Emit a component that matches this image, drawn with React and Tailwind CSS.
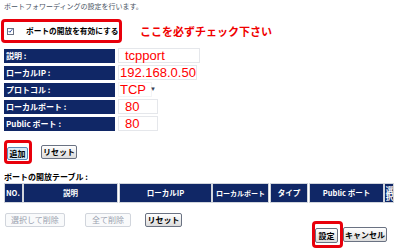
import React from 'react';

const navy = 'bg-[#102766]';

const FormRow = ({ label, children }) => (
    <div className="flex items-center gap-[3px] h-[15px]">
        <div className={`w-[111px] h-[14px] ${navy} text-white font-bold text-[8px] leading-[14px] pl-[2px] whitespace-nowrap`}>
            {label}
        </div>
        {children}
    </div>
);

const Btn = ({ children, className = '', disabled = false }) => (
    <button
        className={`h-[14px] p-0 flex items-center justify-center text-[8px] leading-[10px] rounded-[2px] border whitespace-nowrap ${disabled
            ? 'border-gray-300 bg-gray-50 text-gray-400'
            : 'border-gray-500 bg-gradient-to-b from-white to-[#dcdcdc] text-black font-bold'
            } ${className}`}
    >
        {children}
    </button>
);

const HeadCell = ({ w, children, className = '' }) => (
    <div className={`${w} h-[18px] ${navy} text-white font-bold text-[7.5px] whitespace-nowrap flex items-center justify-center outline outline-1 outline-gray-300 ${className}`}>
        {children}
    </div>
);

export default function App() {
    return (
        <div className="w-[400px] h-[250px] bg-white overflow-hidden font-['Noto_Sans_CJK_JP',sans-serif]">
            <div className="pl-[4px] pt-[2px]">
                {/* Intro */}
                <p className="text-[7px] leading-[9px] text-gray-600 whitespace-nowrap">ポートフォワーディングの設定を行います。</p>

                {/* Enable checkbox with callout */}
                <div className="mt-[8px] flex items-center">
                    <div className="-ml-[3px] w-[121px] h-[24px] border-[3px] border-[#e8000b] rounded-[4px] flex items-center pl-[3px]">
                        <span className="w-[7px] h-[7px] border border-gray-500 bg-white flex items-center justify-center">
                            <svg viewBox="0 0 8 8" className="w-[6px] h-[6px]">
                                <path d="M1 4 L3 6 L7 1" fill="none" stroke="#1d3f9a" strokeWidth="1.4" />
                            </svg>
                        </span>
                        <span className="ml-[12px] text-[7.7px] font-bold text-black whitespace-nowrap">ポートの開放を有効にする</span>
                    </div>
                    <span className="ml-[18px] text-[11px] font-bold text-[#f00000] whitespace-nowrap">ここを必ずチェック下さい</span>
                </div>

                {/* Form */}
                <div className="mt-[5px] flex flex-col gap-[2px]">
                    <FormRow label="説明 :">
                        <div className="w-[82px] h-[15px] border border-gray-200 text-[13px] leading-[13px] text-[#f00] pl-[6px] font-['Liberation_Sans',sans-serif]">tcpport</div>
                    </FormRow>
                    <FormRow label="ローカルIP :">
                        <div className="w-[79px] h-[15px] border border-gray-200 text-[13px] leading-[13px] text-[#f00] pl-[1px] font-['Liberation_Sans',sans-serif] whitespace-nowrap">192.168.0.50</div>
                    </FormRow>
                    <FormRow label="プロトコル :">
                        <div className="w-[34px] h-[15px] border border-gray-100 text-[13px] leading-[13px] text-[#f00] pl-[1px] font-['Liberation_Sans',sans-serif] flex items-center">
                            TCP
                            <span className="ml-[4px] text-[6px] text-gray-700">▼</span>
                        </div>
                    </FormRow>
                    <FormRow label="ローカルポート :">
                        <div className="w-[40px] h-[15px] border border-gray-200 text-[13px] leading-[13px] text-[#f00] pl-[6px] font-['Liberation_Sans',sans-serif]">80</div>
                    </FormRow>
                    <FormRow label="Public ポート :">
                        <div className="w-[40px] h-[15px] border border-gray-200 text-[13px] leading-[13px] text-[#f00] pl-[6px] font-['Liberation_Sans',sans-serif]">80</div>
                    </FormRow>
                </div>

                {/* Add / Reset */}
                <div className="mt-[9px] flex items-center">
                    <div className="w-[28px] h-[24px] border-[3px] border-[#e8000b] rounded-[4px] flex items-start pl-[0px] pt-[4px]">
                        <button className="w-[21px] h-[13px] p-0 flex items-center justify-center text-[8px] leading-[10px] border border-[#5b8bb8] bg-[#d8ebf8] rounded-[2px] text-black font-bold">追加</button>
                    </div>
                    <Btn className="ml-[9px] w-[36px] h-[13px]">リセット</Btn>
                </div>

                {/* Table */}
                <p className="mt-[8px] text-[8px] leading-[10px] font-bold text-black whitespace-nowrap">ポートの開放テーブル :</p>
                <div className="mt-[2px] flex items-center">
                    <HeadCell w="w-[17px] ml-[1px]" className="!justify-start pl-[1px]">NO.</HeadCell>
                    <HeadCell w="w-[93px] ml-[2px]">説明</HeadCell>
                    <HeadCell w="w-[91px] ml-[3px]">ローカルIP</HeadCell>
                    <HeadCell w="w-[55px] ml-[2px]" className="text-[7px]">ローカルポート</HeadCell>
                    <HeadCell w="w-[36px] ml-[3px]">タイプ</HeadCell>
                    <HeadCell w="w-[73px] ml-[3px]">Public ポート</HeadCell>
                    <HeadCell w="w-[8px] ml-[2px]" className="text-[6.5px] leading-[8px] [writing-mode:vertical-rl]">選択</HeadCell>
                </div>

                {/* Table buttons */}
                <div className="mt-[11px] flex items-center">
                    <Btn disabled className="ml-[1px] w-[60px]">選択して削除</Btn>
                    <Btn disabled className="ml-[20px] w-[46px]">全て削除</Btn>
                    <Btn className="ml-[14px] w-[37px]">リセット</Btn>
                </div>

                {/* Apply / Cancel */}
                <div className="-mt-[6px] flex items-center justify-end pr-[13px]">
                    <div className="w-[31px] h-[27px] border-[3px] border-[#e8000b] rounded-[4px] flex items-start pt-[4px]">
                        <Btn className="w-[23px] h-[15px]">設定</Btn>
                    </div>
                    <Btn className="w-[44px] h-[15px]">キャンセル</Btn>
                </div>
            </div>
        </div>
    );
}
